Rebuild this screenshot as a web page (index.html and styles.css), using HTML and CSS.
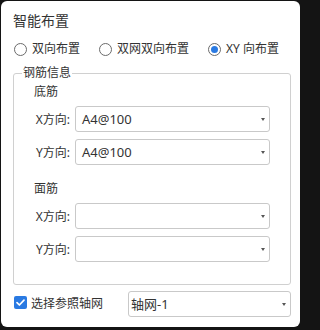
FILE: index.html
```html
<!DOCTYPE html>
<html lang="zh">
<head>
<meta charset="utf-8">
<title>智能布置</title>
<link rel="stylesheet" href="styles.css">
</head>
<body>
<div class="dialog">
  <div class="title">智能布置</div>
  <div class="options">
    <label class="option"><span class="radio"></span><span>双向布置</span></label>
    <label class="option"><span class="radio"></span><span>双网双向布置</span></label>
    <label class="option"><span class="radio checked"></span><span>XY 向布置</span></label>
  </div>
  <div class="group">
    <span class="group-title">钢筋信息</span>
    <div class="sub">底筋</div>
    <div class="rows">
      <div class="row"><span class="lbl">X方向:</span><div class="select"><span class="val">A4@100</span><span class="arrow"></span></div></div>
      <div class="row"><span class="lbl">Y方向:</span><div class="select"><span class="val">A4@100</span><span class="arrow"></span></div></div>
    </div>
    <div class="sub sub2">面筋</div>
    <div class="rows">
      <div class="row"><span class="lbl">X方向:</span><div class="select"><span class="val"></span><span class="arrow"></span></div></div>
      <div class="row"><span class="lbl">Y方向:</span><div class="select"><span class="val"></span><span class="arrow"></span></div></div>
    </div>
  </div>
  <div class="bottom">
    <label class="check">
      <span class="box"><svg width="13" height="13" viewBox="0 0 13 13"><path d="M3 6.6 L5.4 9 L10 4.2" fill="none" stroke="#fff" stroke-width="1.7" stroke-linecap="round" stroke-linejoin="round"/></svg></span>
      <span>选择参照轴网</span>
    </label>
    <div class="select wide"><span class="val">轴网-1</span><span class="arrow"></span></div>
  </div>
</div>
</body>
</html>
```
FILE: styles.css
```css
html, body {
  margin: 0;
  padding: 0;
}
body {
  background: #141414;
  width: 302px;
  height: 330px;
  overflow: hidden;
  font-family: "Noto Sans", "Noto Sans CJK SC", sans-serif;
  color: #333;
}
.dialog {
  margin: 1px 0 0 1px;
  width: 299px;
  height: 326px;
  box-sizing: border-box;
  background: #fff;
  border-radius: 6px;
  padding: 10px 10px 0 12px;
}
.title {
  font-size: 14px;
  line-height: 20px;
  height: 20px;
}
.options {
  margin-top: 8px;
  height: 20px;
  display: flex;
  align-items: center;
  gap: 19px;
  font-size: 12px;
}
.option {
  display: flex;
  align-items: center;
  gap: 5px;
  line-height: 20px;
}
.radio {
  width: 13px;
  height: 13px;
  box-sizing: border-box;
  border: 1px solid #6b6b6b;
  border-radius: 50%;
  display: flex;
  align-items: center;
  justify-content: center;
  margin-left: 1px;
}
.radio.checked::after {
  content: "";
  width: 7px;
  height: 7px;
  border-radius: 50%;
  background: #2a7ae2;
}
.option + .option .radio {
  margin-left: 0;
}
.group {
  position: relative;
  margin-top: 14px;
  width: 278px;
  box-sizing: border-box;
  border: 1px solid #d0d0d0;
  border-radius: 3px;
  padding: 9px 20px 22px 20px;
}
.group-title {
  position: absolute;
  top: -9px;
  left: 8px;
  padding: 0 1px;
  background: #fff;
  font-size: 12px;
  line-height: 16px;
}
.sub {
  font-size: 12px;
  line-height: 18px;
  height: 18px;
}
.sub2 {
  margin-top: 15px;
}
.rows {
  margin-top: 5px;
  display: flex;
  flex-direction: column;
  gap: 7px;
}
.row {
  display: flex;
  align-items: center;
  gap: 5px;
  height: 26px;
}
.lbl {
  width: 36px;
  text-align: right;
  font-size: 12px;
  white-space: nowrap;
}
.select {
  flex: 1;
  height: 26px;
  box-sizing: border-box;
  border: 1px solid #c9c9c9;
  border-radius: 3px;
  display: flex;
  align-items: center;
  justify-content: space-between;
  padding: 0 4px 0 6px;
  background: #fff;
}
.val {
  font-size: 13px;
  line-height: 20px;
  color: #333;
}
.arrow {
  width: 0;
  height: 0;
  border-left: 2.5px solid transparent;
  border-right: 2.5px solid transparent;
  border-top: 3px solid #555;
}
.bottom {
  margin-top: 6px;
  display: flex;
  align-items: center;
  justify-content: space-between;
  width: 278px;
  height: 26px;
}
.check {
  display: flex;
  align-items: center;
  gap: 4px;
  font-size: 12px;
  margin-left: 1px;
  margin-top: -3px;
}
.box {
  width: 13px;
  height: 13px;
  background: #2a7ae2;
  border-radius: 2px;
  display: flex;
}
.select.wide {
  flex: 0 0 163px;
  padding-left: 2px;
}
```
